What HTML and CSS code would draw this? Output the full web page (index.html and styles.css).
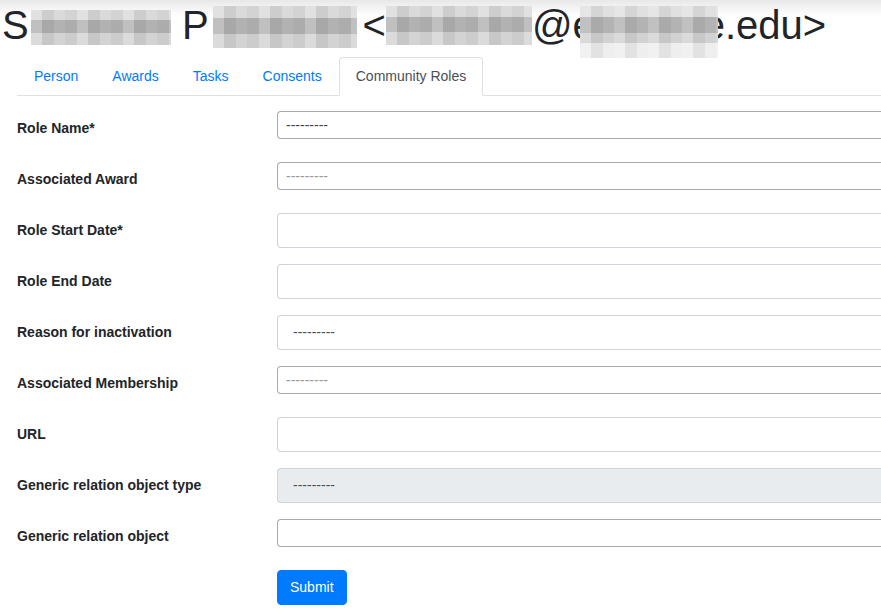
FILE: index.html
```html
<!DOCTYPE html>
<html lang="en">
<head>
<meta charset="utf-8">
<title>Community Roles</title>
<link rel="stylesheet" href="styles.css">
</head>
<body>
<h1 class="title">S<span class="blur b1"></span> P<span class="blur b2"></span> &lt;<span class="blur b3"></span>@e<span class="blur b4"></span>e.edu&gt;</h1>
<main class="content">
  <nav class="tabs">
    <a class="tab" href="#">Person</a>
    <a class="tab" href="#">Awards</a>
    <a class="tab" href="#">Tasks</a>
    <a class="tab" href="#">Consents</a>
    <a class="tab active" href="#">Community Roles</a>
  </nav>
  <form class="form">
    <div class="row">
      <label class="label">Role Name*</label>
      <div class="control"><span class="select2">---------</span></div>
    </div>
    <div class="row">
      <label class="label">Associated Award</label>
      <div class="control"><span class="select2 placeholder">---------</span></div>
    </div>
    <div class="row">
      <label class="label">Role Start Date*</label>
      <div class="control"><input class="form-control" type="text"></div>
    </div>
    <div class="row">
      <label class="label">Role End Date</label>
      <div class="control"><input class="form-control" type="text"></div>
    </div>
    <div class="row">
      <label class="label">Reason for inactivation</label>
      <div class="control"><select class="form-control"><option>---------</option></select></div>
    </div>
    <div class="row">
      <label class="label">Associated Membership</label>
      <div class="control"><span class="select2 placeholder">---------</span></div>
    </div>
    <div class="row">
      <label class="label">URL</label>
      <div class="control"><input class="form-control" type="text"></div>
    </div>
    <div class="row">
      <label class="label">Generic relation object type</label>
      <div class="control"><select class="form-control" disabled><option>---------</option></select></div>
    </div>
    <div class="row">
      <label class="label">Generic relation object</label>
      <div class="control"><span class="select2"></span></div>
    </div>
    <div class="actions">
      <button class="btn" type="submit">Submit</button>
    </div>
  </form>
</main>
</body>
</html>
```
FILE: styles.css
```css
html, body {
  margin: 0;
  overflow: hidden;
}
body {
  font-family: "Liberation Sans", Arial, sans-serif;
  font-size: 14px;
  line-height: 1.5;
  color: #212529;
  background: #fff linear-gradient(#e8e8e8, #fff 16px) no-repeat;
}
.title {
  font-size: 40px;
  font-weight: 400;
  line-height: 1.2;
  margin: 1px 0 8px;
  padding-left: 2px;
  white-space: nowrap;
}
.blur {
  display: inline-block;
  position: relative;
  z-index: 1;
  background:
    repeating-linear-gradient(90deg, rgba(255,255,255,.18) 0 11px, rgba(0,0,0,.06) 11px 23px, rgba(255,255,255,0) 23px 34px, rgba(0,0,0,.03) 34px 46px),
    linear-gradient(#dadada 0 28%, #b2b2b2 28% 66%, #d3d3d3 66%);
}
.b1 { width: 140px; height: 35px; margin-left: 2.3px; margin-bottom: -6px; }
.b2 { width: 144px; height: 42px; margin-left: 4.2px; margin-right: -5.5px; margin-bottom: -9px; }
.b3 { width: 146px; height: 39px; margin-bottom: -6px; }
.b4 {
  width: 138px; height: 52px; margin-left: -14.8px; margin-right: -15.3px; margin-bottom: -19px;
  background:
    repeating-linear-gradient(90deg, rgba(255,255,255,.18) 0 11px, rgba(0,0,0,.05) 11px 23px, rgba(255,255,255,0) 23px 34px),
    linear-gradient(#e0e0e0 0 22%, #b3b3b3 22% 52%, #d2d2d2 52% 72%, #eeeeee 72%);
}
.content {
  padding-left: 17px;
}
.tabs {
  display: flex;
  border-bottom: 1px solid #dee2e6;
}
.tab {
  display: block;
  padding: 8px 16px;
  margin-bottom: -1px;
  border: 1px solid transparent;
  border-radius: 4px 4px 0 0;
  color: #007bff;
  text-decoration: none;
}
.tab.active {
  color: #495057;
  background: #fff;
  border-color: #dee2e6 #dee2e6 #fff;
}
.form {
  margin-top: 15px;
}
.row {
  display: flex;
  margin-bottom: 16px;
}
.label {
  flex: 0 0 260px;
  padding: 7px 0;
  font-weight: 700;
}
.control {
  flex: 1;
  min-width: 0;
}
.select2 {
  display: block;
  box-sizing: border-box;
  height: 28px;
  padding-left: 8px;
  line-height: 26px;
  color: #444;
  background: #fff;
  border: 1px solid #aaa;
  border-right: 0;
  border-radius: 4px 0 0 4px;
}
.select2.placeholder {
  color: #999;
}
.form-control {
  display: block;
  box-sizing: border-box;
  width: 100%;
  height: 35px;
  margin: 0;
  padding: 6px 12px;
  font: inherit;
  line-height: 21px;
  color: #495057;
  background: #fff;
  border: 1px solid #ced4da;
  border-right: 0;
  border-radius: 4px 0 0 4px;
}
select.form-control {
  -webkit-appearance: none;
  appearance: none;
  padding-left: 15px;
}
select.form-control:disabled {
  background: #e9ecef;
  color: #495057;
  opacity: 1;
}
.actions {
  padding-left: 260px;
}
.btn {
  font: inherit;
  line-height: 21px;
  color: #fff;
  background: #007bff;
  border: 1px solid #007bff;
  border-radius: 4px;
  padding: 6px 12px;
  margin: 0;
}
```
